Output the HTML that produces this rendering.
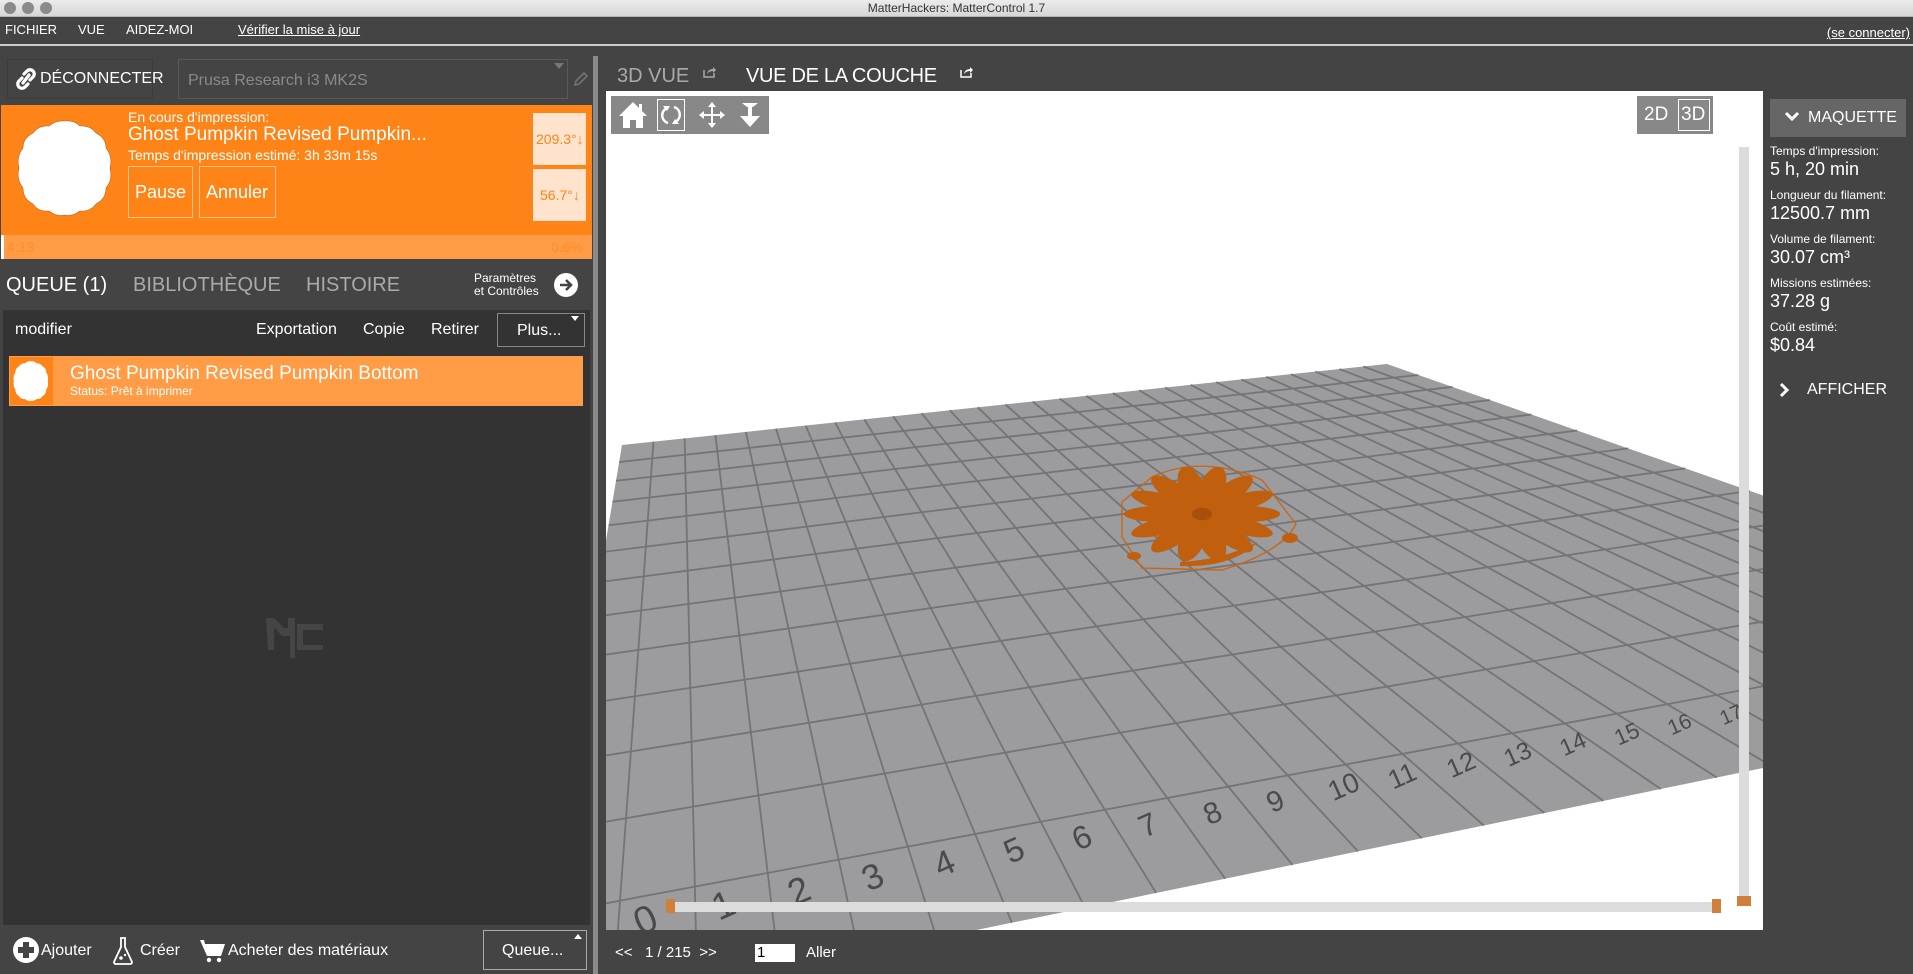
<!DOCTYPE html>
<html><head><meta charset="utf-8">
<style>
*{margin:0;padding:0;box-sizing:border-box}
body{width:1913px;height:974px;overflow:hidden;background:#444;font-family:"Liberation Sans",sans-serif;position:relative;color:#fff}
.a{position:absolute;white-space:nowrap}
</style></head><body>
<!-- title bar -->
<div class="a" style="left:0;top:0;width:1913px;height:17px;background:linear-gradient(#ececec,#d6d6d6);border-bottom:1px solid #b5b5b5"></div>
<div class="a" style="left:4px;top:2px;width:12px;height:12px;border-radius:50%;background:#8a8a8a"></div>
<div class="a" style="left:22px;top:2px;width:12px;height:12px;border-radius:50%;background:#8a8a8a"></div>
<div class="a" style="left:40px;top:2px;width:12px;height:12px;border-radius:50%;background:#8a8a8a"></div>
<div class="a" style="left:0;width:1913px;top:1px;text-align:center;font-size:12px;color:#333">MatterHackers: MatterControl 1.7</div>
<!-- menu -->
<div class="a" style="left:0;top:18px;width:1913px;height:26px;background:#444"></div>
<div class="a" style="left:5px;top:22px;font-size:13px">FICHIER</div>
<div class="a" style="left:78px;top:22px;font-size:13px">VUE</div>
<div class="a" style="left:126px;top:22px;font-size:13px">AIDEZ-MOI</div>
<div class="a" style="left:238px;top:22px;font-size:13px;text-decoration:underline">Vérifier la mise à jour</div>
<div class="a" style="right:3px;top:25px;font-size:13px;text-decoration:underline">(se connecter)</div>
<div class="a" style="left:0;top:44px;width:1913px;height:2px;background:#ccc"></div>
<!-- left panel -->
<div class="a" style="left:593px;top:56px;width:5px;height:918px;background:#8a8a8a"></div>
<div class="a" style="left:7px;top:59px;width:146px;height:40px;border:1px solid #3c3c3c"></div>
<svg class="a" style="left:14px;top:66px" width="24" height="26" viewBox="0 0 24 26"><g fill="none" stroke="#fff" stroke-width="3.2" stroke-linecap="round"><path d="M10 8 L13 5 a4 4 0 0 1 6 6 L16 14"/><path d="M14 18 L11 21 a4 4 0 0 1 -6 -6 L8 12"/><path d="M9 17 L15 9"/></g></svg>
<div class="a" style="left:40px;top:70px;font-size:16px">DÉCONNECTER</div>
<div class="a" style="left:178px;top:59px;width:390px;height:40px;border:1px solid #595959"></div>
<div class="a" style="left:188px;top:72px;font-size:16px;color:#8a8a8a">Prusa Research i3 MK2S</div>
<div class="a" style="left:554px;top:63px;width:0;height:0;border-left:5px solid transparent;border-right:5px solid transparent;border-top:6px solid #777"></div>
<svg class="a" style="left:573px;top:71px" width="16" height="16"><path d="M2 14 L3 10 L11 2 L14 5 L6 13 Z" fill="none" stroke="#777" stroke-width="1.5"/></svg>
<!-- orange print panel -->
<div class="a" style="left:1px;top:105px;width:591px;height:130px;background:#ff8418"></div>
<svg class="a" style="left:14px;top:118px" width="102" height="100" viewBox="0 0 102 100"><path d="M51 3 Q60 2 66 8 Q76 7 82 15 Q92 20 92 30 Q99 39 96 50 Q99 62 92 70 Q92 81 82 86 Q76 94 66 93 Q58 99 51 97 Q42 99 35 93 Q24 94 19 86 Q9 81 9 70 Q2 61 5 50 Q2 39 9 30 Q9 20 19 15 Q25 7 35 8 Q42 2 51 3Z" fill="#fff" stroke="#c06010" stroke-width="0.6"/></svg>
<div class="a" style="left:128px;top:109px;font-size:14px">En cours d'impression:</div>
<div class="a" style="left:128px;top:124px;font-size:19px">Ghost Pumpkin Revised Pumpkin...</div>
<div class="a" style="left:128px;top:147px;font-size:14px">Temps d'impression estimé: 3h 33m 15s</div>
<div class="a" style="left:128px;top:166px;width:65px;height:52px;border:1px solid #ffc08a;font-size:18px;padding:15px 0 0 6px">Pause</div>
<div class="a" style="left:199px;top:166px;width:77px;height:52px;border:1px solid #ffc08a;font-size:18px;padding:15px 0 0 6px">Annuler</div>
<div class="a" style="left:533px;top:113px;width:53px;height:52px;background:#ffe3cc;color:#ff8418;font-size:14px;padding:18px 0 0 3px">209.3°↓</div>
<div class="a" style="left:533px;top:169px;width:53px;height:52px;background:#ffe3cc;color:#ff8418;font-size:14px;padding:18px 0 0 7px">56.7°↓</div>
<div class="a" style="left:1px;top:235px;width:591px;height:24px;background:#ff9c45"></div>
<div class="a" style="left:1px;top:235px;width:3px;height:24px;background:#fff"></div>
<div class="a" style="left:7px;top:239px;font-size:14px;color:#ff8d2a">4:13</div>
<div class="a" style="left:551px;top:239px;font-size:14px;color:#ff8d2a">0.6%</div>
<!-- tabs -->
<div class="a" style="left:6px;top:274px;font-size:20px">QUEUE (1)</div>
<div class="a" style="left:133px;top:274px;font-size:20px;color:#aaa">BIBLIOTHÈQUE</div>
<div class="a" style="left:306px;top:274px;font-size:20px;color:#aaa">HISTOIRE</div>
<div class="a" style="left:474px;top:272px;font-size:12px;line-height:13px">Paramètres<br>et Contrôles</div>
<div class="a" style="left:554px;top:273px;width:24px;height:24px;border-radius:50%;background:#fff"></div>
<svg class="a" style="left:554px;top:273px" width="24" height="24"><path d="M6 12 H17 M12 7 L17 12 L12 17" fill="none" stroke="#444" stroke-width="2.6"/></svg>
<!-- list -->
<div class="a" style="left:3px;top:310px;width:587px;height:615px;background:#333"></div>
<div class="a" style="left:15px;top:321px;font-size:16px">modifier</div>
<div class="a" style="left:256px;top:321px;font-size:16px">Exportation</div>
<div class="a" style="left:363px;top:321px;font-size:16px">Copie</div>
<div class="a" style="left:431px;top:321px;font-size:16px">Retirer</div>
<div class="a" style="left:497px;top:313px;width:88px;height:34px;border:1px solid #888;font-size:16px;padding:8px 0 0 19px">Plus...</div>
<div class="a" style="left:571px;top:316px;width:0;height:0;border-left:4px solid transparent;border-right:4px solid transparent;border-top:5px solid #fff"></div>
<div class="a" style="left:9px;top:356px;width:574px;height:50px;background:#ff9c45"></div>
<div class="a" style="left:10px;top:357px;width:43px;height:48px;background:#ff8418"></div>
<svg class="a" style="left:12px;top:360px" width="38" height="42" viewBox="0 0 102 100" preserveAspectRatio="none"><path d="M51 3 Q60 2 66 8 Q76 7 82 15 Q92 20 92 30 Q99 39 96 50 Q99 62 92 70 Q92 81 82 86 Q76 94 66 93 Q58 99 51 97 Q42 99 35 93 Q24 94 19 86 Q9 81 9 70 Q2 61 5 50 Q2 39 9 30 Q9 20 19 15 Q25 7 35 8 Q42 2 51 3Z" fill="#fff"/></svg>
<div class="a" style="left:70px;top:363px;font-size:19px">Ghost Pumpkin Revised Pumpkin Bottom</div>
<div class="a" style="left:70px;top:384px;font-size:12px">Status: Prêt à imprimer</div>
<svg class="a" style="left:266px;top:618px" width="60" height="42"><path d="M0 0 L8 0 L18 10 L22 10 L22 0 L29 0 L29 40 L24 40 L24 18 L16 18 L8 9 L8 32 L2 32 Z" fill="#454545"/><path d="M31 6 L57 6 L57 12 L37 12 L37 27 L57 27 L57 32 L31 32 Z" fill="#454545"/></svg>
<!-- bottom left -->
<div class="a" style="left:13px;top:937px;width:26px;height:26px;border-radius:50%;background:#fff"></div>
<div class="a" style="left:18px;top:947px;width:16px;height:6px;background:#444"></div>
<div class="a" style="left:23px;top:942px;width:6px;height:16px;background:#444"></div>
<div class="a" style="left:41px;top:942px;font-size:16px">Ajouter</div>
<svg class="a" style="left:112px;top:936px" width="22" height="30"><path d="M8 2 H14 M9 2 V11 L2 26 Q2 28 4 28 H18 Q20 28 20 26 L13 11 V2" fill="none" stroke="#fff" stroke-width="1.8"/><circle cx="9" cy="22" r="1.8" fill="#fff"/><circle cx="13" cy="19" r="1.2" fill="#fff"/></svg>
<div class="a" style="left:140px;top:942px;font-size:16px">Créer</div>
<svg class="a" style="left:199px;top:938px" width="28" height="26"><path d="M1 2 H5 L6 6 H26 L22 18 H8 Z" fill="#fff"/><circle cx="10" cy="22" r="2.2" fill="#fff"/><circle cx="20" cy="22" r="2.2" fill="#fff"/></svg>
<div class="a" style="left:228px;top:942px;font-size:16px">Acheter des matériaux</div>
<div class="a" style="left:483px;top:930px;width:104px;height:40px;border:1px solid #aaa;font-size:16px;padding:11px 0 0 18px">Queue...</div>
<div class="a" style="left:574px;top:934px;width:0;height:0;border-left:4px solid transparent;border-right:4px solid transparent;border-bottom:5px solid #fff"></div>
<!-- right tabs -->
<div class="a" style="left:617px;top:65px;font-size:20px;color:#aaa">3D VUE</div>
<svg class="a" style="left:703px;top:66px" width="14" height="12"><path d="M1 4 V11 H11 V7" fill="none" stroke="#aaa" stroke-width="1.5"/><path d="M4 8 Q5 3 10 3 V1 L13 4 L10 7 V5 Q6 5 4 8Z" fill="#aaa"/></svg>
<div class="a" style="left:746px;top:65px;font-size:20px;letter-spacing:-0.3px">VUE DE LA COUCHE</div>
<svg class="a" style="left:960px;top:66px" width="14" height="12"><path d="M1 4 V11 H11 V7" fill="none" stroke="#fff" stroke-width="1.5"/><path d="M4 8 Q5 3 10 3 V1 L13 4 L10 7 V5 Q6 5 4 8Z" fill="#fff"/></svg>
<!-- viewport -->
<svg id="vp" class="a" style="left:606px;top:91px;background:#fff;overflow:hidden" width="1157" height="839"></svg>
<div class="a" style="left:611px;top:96px;width:158px;height:38px;background:#888"></div>
<svg class="a" style="left:617px;top:99px" width="32" height="32"><path d="M16 3 L30 17 H26 V29 H19 V21 H13 V29 H6 V17 H2 Z" fill="#fff"/><rect x="22" y="5" width="3" height="7" fill="#fff"/></svg>
<div class="a" style="left:657px;top:99px;width:28px;height:32px;border:1px solid #fff"></div>
<svg class="a" style="left:659px;top:102px" width="24" height="26"><path d="M8 6 A8 8 0 0 0 9 21" fill="none" stroke="#fff" stroke-width="2.4"/><path d="M16 20 A8 8 0 0 0 15 5" fill="none" stroke="#fff" stroke-width="2.4"/><path d="M4 4 L11 4 L8 9Z M20 22 L13 22 L16 17Z" fill="#fff"/></svg>
<svg class="a" style="left:698px;top:101px" width="28" height="28"><path d="M14 2 V26 M2 14 H26" stroke="#fff" stroke-width="2"/><path d="M14 1 L10 6 H18Z M14 27 L10 22 H18Z M1 14 L6 10 V18Z M27 14 L22 10 V18Z" fill="#fff"/></svg>
<svg class="a" style="left:736px;top:101px" width="28" height="28"><path d="M6 2 H22 L17 6 H16 V15 H24 L14 26 L4 15 H12 V6 H11Z" fill="#fff"/></svg>
<div class="a" style="left:1637px;top:96px;width:76px;height:38px;background:#888"></div>
<div class="a" style="left:1644px;top:104px;font-size:19px">2D</div>
<div class="a" style="left:1678px;top:99px;width:32px;height:32px;border:1px solid #fff;font-size:19px;padding:4px 0 0 2px">3D</div>
<div class="a" style="left:1739px;top:147px;width:10px;height:755px;background:#dcdcdc"></div>
<div class="a" style="left:1737px;top:896px;width:14px;height:10px;background:#d0803a"></div>
<div class="a" style="left:668px;top:902px;width:1050px;height:10px;background:#dcdcdc"></div>
<div class="a" style="left:666px;top:899px;width:9px;height:14px;background:#d0803a"></div>
<div class="a" style="left:1712px;top:899px;width:9px;height:14px;background:#d0803a"></div>
<!-- right sidebar -->
<div class="a" style="left:1763px;top:91px;width:150px;height:839px;background:#444"></div>
<div class="a" style="left:1770px;top:99px;width:136px;height:38px;background:#666;font-size:16px;padding:10px 0 0 38px">MAQUETTE</div>
<svg class="a" style="left:1784px;top:110px" width="16" height="14"><path d="M2 3 L8 9 L14 3" fill="none" stroke="#fff" stroke-width="3"/></svg>
<div class="a" style="left:1770px;top:144px;font-size:12px">Temps d'impression:</div>
<div class="a" style="left:1770px;top:159px;font-size:18px">5 h, 20 min</div>
<div class="a" style="left:1770px;top:188px;font-size:12px">Longueur du filament:</div>
<div class="a" style="left:1770px;top:203px;font-size:18px">12500.7 mm</div>
<div class="a" style="left:1770px;top:232px;font-size:12px">Volume de filament:</div>
<div class="a" style="left:1770px;top:247px;font-size:18px">30.07 cm³</div>
<div class="a" style="left:1770px;top:276px;font-size:12px">Missions estimées:</div>
<div class="a" style="left:1770px;top:291px;font-size:18px">37.28 g</div>
<div class="a" style="left:1770px;top:320px;font-size:12px">Coût estimé:</div>
<div class="a" style="left:1770px;top:335px;font-size:18px">$0.84</div>
<svg class="a" style="left:1778px;top:382px" width="12" height="16"><path d="M3 2 L9 8 L3 14" fill="none" stroke="#fff" stroke-width="3"/></svg>
<div class="a" style="left:1807px;top:381px;font-size:16px">AFFICHER</div>
<!-- bottom right -->
<div class="a" style="left:615px;top:944px;font-size:15px">&lt;&lt;&nbsp;&nbsp; 1 / 215 &nbsp;&gt;&gt;</div>
<div class="a" style="left:755px;top:944px;width:40px;height:18px;background:#fff;color:#000;font-size:15px;padding-left:2px">1</div>
<div class="a" style="left:806px;top:944px;font-size:15px">Aller</div>
<script>
(function(){
var svg=document.getElementById('vp'),NS='http://www.w3.org/2000/svg',ox=606,oy=91;
var P=[[622,445],[1387,364],[2253,667],[525,1023]].map(function(p){return[p[0]-ox,p[1]-oy]});
function H(u,v){
 var x0=P[0][0],y0=P[0][1],x1=P[1][0],y1=P[1][1],x2=P[2][0],y2=P[2][1],x3=P[3][0],y3=P[3][1];
 var dx1=x1-x2,dx2=x3-x2,dy1=y1-y2,dy2=y3-y2,sx=x0-x1+x2-x3,sy=y0-y1+y2-y3;
 var det=dx1*dy2-dx2*dy1,g=(sx*dy2-dx2*sy)/det,h=(dx1*sy-sx*dy1)/det;
 var a=x1-x0+g*x1,b=x3-x0+h*x3,c=x0,d=y1-y0+g*y1,e=y3-y0+h*y3,f=y0;
 var w=g*u+h*v+1;return[(a*u+b*v+c)/w,(d*u+e*v+f)/w];
}
function el(n,at,par){var e=document.createElementNS(NS,n);for(var k in at)e.setAttribute(k,at[k]);(par||svg).appendChild(e);return e;}
el('polygon',{points:P.map(function(p){return p.join(',')}).join(' '),fill:'#9c9c9e'});
var NU=28,NV=13,i,a,b;
var g=el('g',{stroke:'#6e6e70','stroke-width':'1.8',opacity:'0.85'});
for(i=1;i<NU;i++){a=H(i/NU,0);b=H(i/NU,1);el('line',{x1:a[0],y1:a[1],x2:b[0],y2:b[1]},g);}
for(i=1;i<NV;i++){a=H(0,i/NV);b=H(1,i/NV);el('line',{x1:a[0],y1:a[1],x2:b[0],y2:b[1]},g);}
for(i=1;i<NU;i++){var p=H((i+0.3)/NU,0.955);var fs=Math.max(12,40-i*1.1);var t=el('text',{x:p[0],y:p[1],fill:'#4a4a4a','font-family':'Liberation Sans','font-size':fs,transform:'rotate(-24 '+p[0]+' '+p[1]+')'});t.textContent=String(i-1);}
var cx=1202-ox,cy=522-oy;
el('path',{d:'M'+(cx-50)+' '+(cy-45)+' Q'+cx+' '+(cy-68)+' '+(cx+60)+' '+(cy-42)+' L'+(cx+94)+' '+(cy+2)+' Q'+(cx+80)+' '+(cy+30)+' '+(cx+20)+' '+(cy+48)+' L'+(cx-60)+' '+(cy+46)+' L'+(cx-80)+' '+(cy+15)+' L'+(cx-80)+' '+(cy-20)+'Z',fill:'none',stroke:'#c8661a','stroke-width':'1.4'});
var fg=el('g',{transform:'translate('+cx+' '+(cy-8)+') scale(1,0.62)'});
for(i=0;i<14;i++){el('ellipse',{cx:42,cy:0,rx:36,ry:13,fill:'#c0600e',transform:'rotate('+(i*360/14)+')'},fg);}
el('circle',{r:10,fill:'#a84f0a'},fg);
el('path',{d:'M'+(cx-22)+' '+(cy+40)+' Q'+(cx+20)+' '+(cy+38)+' '+(cx+56)+' '+(cy+20)+' Q'+(cx+30)+' '+(cy+46)+' '+(cx-22)+' '+(cy+44)+'Z',fill:'#c0600e'});
el('ellipse',{cx:cx-68,cy:cy+34,rx:7,ry:4,fill:'#c0600e'});
el('ellipse',{cx:cx+88,cy:cy+16,rx:8,ry:5,fill:'#c0600e'});
})();
</script>
</body></html>
